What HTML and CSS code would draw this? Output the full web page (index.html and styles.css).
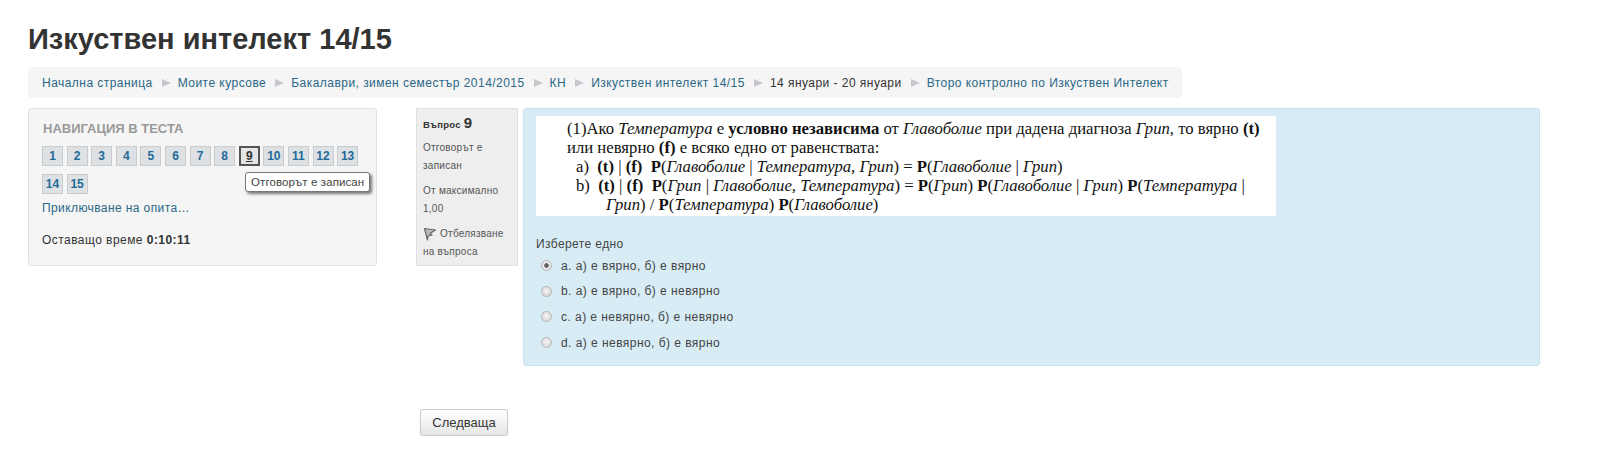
FILE: index.html
```html
<!DOCTYPE html>
<html lang="bg">
<head>
    <meta charset="UTF-8">
    <meta name="viewport" content="width=device-width, initial-scale=1.0">
    <title>Изкуствен интелект 14/15</title>
    <link rel="stylesheet" href="styles.css">
</head>
<body>
    <header>
        <h1>Изкуствен интелект 14/15</h1>
        <nav class="breadcrumb">
            <a href="#">Начална страница</a><span class="sep"></span>
            <a href="#">Моите курсове</a><span class="sep"></span>
            <a href="#">Бакалаври, зимен семестър 2014/2015</a><span class="sep"></span>
            <a href="#">КН</a><span class="sep"></span>
            <a href="#">Изкуствен интелект 14/15</a><span class="sep"></span>
            <span>14 януари - 20 януари</span><span class="sep"></span>
            <a href="#">Второ контролно по Изкуствен Интелект</a>
        </nav>
    </header>

    <div class="page">
        <aside class="quiz-nav">
            <h2>Навигация в теста</h2>
            <div class="buttons">
                <a class="qbtn" href="#">1</a>
                <a class="qbtn" href="#">2</a>
                <a class="qbtn" href="#">3</a>
                <a class="qbtn" href="#">4</a>
                <a class="qbtn" href="#">5</a>
                <a class="qbtn" href="#">6</a>
                <a class="qbtn" href="#">7</a>
                <a class="qbtn" href="#">8</a>
                <a class="qbtn current" href="#">9</a>
                <a class="qbtn" href="#">10</a>
                <a class="qbtn" href="#">11</a>
                <a class="qbtn" href="#">12</a>
                <a class="qbtn" href="#">13</a>
                <a class="qbtn" href="#">14</a>
                <a class="qbtn" href="#">15</a>
            </div>
            <div class="tooltip">Отговорът е записан</div>
            <a class="finish" href="#">Приключване на опита…</a>
            <div class="timer">Оставащо време <b>0:10:11</b></div>
        </aside>

        <main class="quiz">
            <div class="question">
                <div class="info">
                    <h3>Въпрос <span>9</span></h3>
                    <p>Отговорът е записан</p>
                    <p>От максимално 1,00</p>
                    <p>
                        <svg class="flag" width="14" height="14" viewBox="0 0 14 14">
                            <path d="M1.5 1.5 L12.5 3 L7 6.5 L9 8 L5 9 L4.5 13 Z" fill="#bbb" stroke="#666" stroke-width="1.2" stroke-linejoin="round"/>
                        </svg>
                        Отбелязване на въпроса
                    </p>
                </div>
                <div class="content">
                    <div class="formula">
                        <div class="first">(1)Ако <i>Температура</i> е <b>условно независима</b> от <i>Главоболие</i> при дадена диагноза <i>Грип</i>, то вярно <b>(t)</b></div>
                        <div class="first">или невярно <b>(f)</b> е всяко едно от равенствата:</div>
                        <div class="item">a)&nbsp; <b>(t)</b> | <b>(f)</b> &nbsp;<b>P</b>(<i>Главоболие</i> | <i>Температура, Грип</i>) = <b>P</b>(<i>Главоболие</i> | <i>Грип</i>)</div>
                        <div class="item">b)&nbsp; <b>(t)</b> | <b>(f)</b> &nbsp;<b>P</b>(<i>Грип</i> | <i>Главоболие, Температура</i>) = <b>P</b>(<i>Грип</i>) <b>P</b>(<i>Главоболие</i> | <i>Грип</i>) <b>P</b>(<i>Температура</i> |</div>
                        <div class="cont"><i>Грип</i>) / <b>P</b>(<i>Температура</i>) <b>P</b>(<i>Главоболие</i>)</div>
                    </div>
                    <div class="prompt">Изберете едно</div>
                    <label class="answer"><input type="radio" name="q9" checked> a. а) е вярно, б) е вярно</label>
                    <label class="answer"><input type="radio" name="q9"> b. а) е вярно, б) е невярно</label>
                    <label class="answer"><input type="radio" name="q9"> c. а) е невярно, б) е невярно</label>
                    <label class="answer"><input type="radio" name="q9"> d. а) е невярно, б) е вярно</label>
                </div>
            </div>
            <button class="next" type="button">Следваща</button>
        </main>
    </div>
</body>
</html>
```

FILE: styles.css
```css
body {
    font-family: "Liberation Sans", Arial, sans-serif;
    font-size: 12px;
    color: #333;
    margin: 0;
    padding: 0 28px;
    background-color: #fff;
}

a {
    color: #2a6785;
    text-decoration: none;
}

h1 {
    font-size: 29px;
    line-height: 38px;
    color: #333;
    margin: 0;
    padding-top: 20px;
    height: 47px;
}

.breadcrumb {
    display: flex;
    align-items: center;
    width: 1154px;
    height: 31px;
    box-sizing: border-box;
    padding-left: 14px;
    background-color: #f5f5f5;
    border-radius: 4px;
    white-space: nowrap;
    letter-spacing: 0.46px;
}

.sep {
    width: 0;
    height: 0;
    margin: 0 7px 0 9px;
    border-left: 9px solid #c4c8cc;
    border-top: 4px solid transparent;
    border-bottom: 4px solid transparent;
}

.page {
    display: flex;
    align-items: flex-start;
    gap: 39px;
    margin-top: 10px;
}

.quiz-nav {
    position: relative;
    width: 349px;
    height: 158px;
    box-sizing: border-box;
    padding: 12px 13px;
    background-color: #f5f5f5;
    border: 1px solid #e3e3e3;
    border-radius: 3px;
}

.quiz-nav h2 {
    font-size: 13px;
    line-height: 16px;
    color: #999;
    text-transform: uppercase;
    margin: 0 0 9px;
    padding-left: 1px;
}

.buttons {
    display: flex;
    flex-wrap: wrap;
    gap: 8px 3.6px;
    width: 325px;
}

.qbtn {
    width: 21px;
    height: 20px;
    box-sizing: border-box;
    line-height: 18px;
    text-align: center;
    font-weight: bold;
    font-size: 12px;
    color: #1f6a99;
    background-color: #dde1e3;
    border: 1px solid #c9cccc;
}

.qbtn.current {
    color: #333;
    line-height: 16px;
    text-decoration: underline;
    border: 2px solid #555;
    background-color: #e4e6e6;
}

.tooltip {
    position: absolute;
    left: 216px;
    top: 63px;
    height: 18px;
    line-height: 18px;
    padding: 0 5px;
    font-size: 11.5px;
    letter-spacing: 0.1px;
    color: #444;
    background-color: #fff;
    border: 1px solid #777;
    border-radius: 3px;
    box-shadow: 2px 2px 3px #777;
    white-space: nowrap;
}

.finish {
    display: block;
    margin-top: 6px;
    line-height: 16px;
    letter-spacing: 0.4px;
}

.timer {
    margin-top: 16px;
    line-height: 16px;
    letter-spacing: 0.45px;
}

.quiz {
    width: 1124px;
}

.question {
    display: flex;
    align-items: flex-start;
    gap: 5px;
}

.info {
    width: 102px;
    height: 158px;
    box-sizing: border-box;
    padding: 5px 6px 0;
    background-color: #eee;
    border: 1px solid #e0e0e0;
    font-size: 10px;
    letter-spacing: 0.25px;
    line-height: 18px;
    color: #555;
}

.info h3 {
    font-size: 9.5px;
    font-weight: bold;
    color: #333;
    line-height: 18px;
    margin: 0 0 5px;
}

.info h3 span {
    font-size: 15px;
}

.info p {
    margin: 0 0 7px;
}

.flag {
    vertical-align: -4px;
}

.content {
    width: 1017px;
    height: 258px;
    box-sizing: border-box;
    padding: 7px 12px;
    background-color: #d8ecf6;
    border: 1px solid #c9e3ee;
    border-radius: 3px;
}

.formula {
    width: 740px;
    height: 100px;
    box-sizing: border-box;
    padding: 4px 0 0;
    background-color: #fff;
    font-family: "Liberation Serif", "Times New Roman", serif;
    font-size: 16.7px;
    line-height: 18.9px;
    color: #111;
    white-space: nowrap;
}

.first {
    padding-left: 31px;
}

.item {
    padding-left: 40px;
}

.cont {
    padding-left: 70px;
}

.prompt {
    margin: 20px 0 1px;
    line-height: 16px;
    letter-spacing: 0.4px;
    color: #444;
}

.answer {
    display: flex;
    align-items: center;
    height: 25.6px;
    padding-left: 5px;
    letter-spacing: 0.45px;
    color: #444;
}

.answer input {
    appearance: none;
    width: 11px;
    height: 11px;
    margin: 0 9px 0 0;
    background: radial-gradient(circle at 50% 40%, #f4f4f4, #d0d0d0);
    border: 1px solid #b5b5b5;
    border-radius: 50%;
}

.answer input:checked {
    background: radial-gradient(circle, #666 0 2px, #e8e8e8 2.5px);
}

.next {
    display: block;
    width: 88px;
    height: 27px;
    margin: 43px 0 0 4px;
    font-family: inherit;
    font-size: 13px;
    color: #333;
    background: linear-gradient(#fff, #e6e6e6);
    border: 1px solid #ccc;
    border-radius: 3px;
    box-shadow: 0 1px 2px rgba(0, 0, 0, 0.1);
}
```
